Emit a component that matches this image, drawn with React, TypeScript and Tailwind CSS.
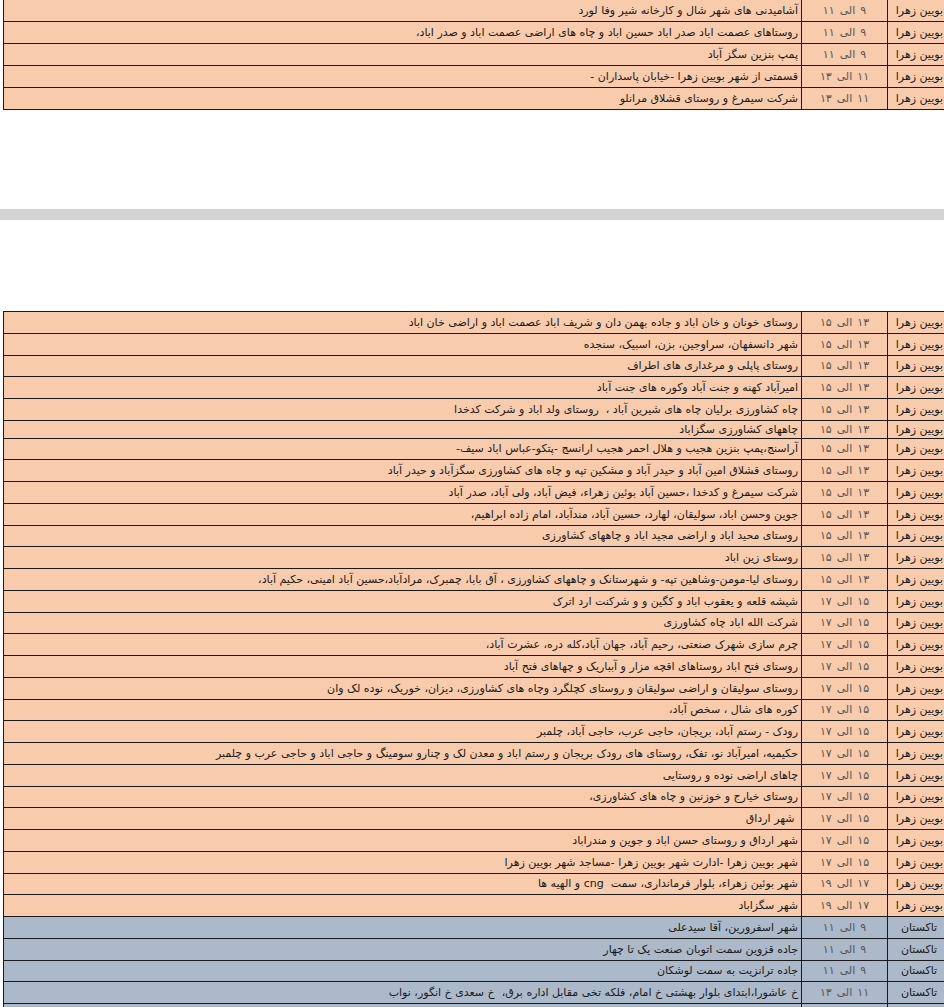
import React from "react";

type Row = { place: string; from: string; to: string; text: string; short?: boolean };

const first: Row[] = [
  { place: "بویین زهرا", from: "۹", to: "۱۱", text: "آشامیدنی های شهر شال و کارخانه شیر وفا لورد" },
  { place: "بویین زهرا", from: "۹", to: "۱۱", text: "روستاهای عصمت اباد صدر اباد حسین اباد و چاه های اراضی عصمت اباد و صدر اباد،" },
  { place: "بویین زهرا", from: "۹", to: "۱۱", text: "پمپ بنزین سگز آباد" },
  { place: "بویین زهرا", from: "۱۱", to: "۱۳", text: "قسمتی از شهر بویین زهرا -خیابان پاسداران -" },
  { place: "بویین زهرا", from: "۱۱", to: "۱۳", text: "شرکت سیمرغ و روستای قشلاق مرانلو" },
];

const bz = "بویین زهرا";
const tk = "تاکستان";

const second: Row[] = [
  { place: bz, from: "۱۳", to: "۱۵", text: "روستای خونان و خان اباد و جاده بهمن دان و شریف اباد عصمت اباد و اراضی خان اباد" },
  { place: bz, from: "۱۳", to: "۱۵", text: "شهر دانسفهان، سراوجین، بزن، اسبیک، سنجده" },
  { place: bz, from: "۱۳", to: "۱۵", text: "روستای پاپلی و مرغداری های اطراف" },
  { place: bz, from: "۱۳", to: "۱۵", text: "امیرآباد کهنه و جنت آباد وکوره های جنت آباد" },
  { place: bz, from: "۱۳", to: "۱۵", text: "چاه کشاورزی برلیان چاه های شیرین آباد ،  روستای ولد اباد و شرکت کدخدا" },
  { place: bz, from: "۱۳", to: "۱۵", text: "چاههای کشاورزی سگزاباد", short: true },
  { place: bz, from: "۱۳", to: "۱۵", text: "آراسنج،پمپ بنزین هجیب و هلال احمر هجیب ارانسج -پتکو-عباس اباد سیف-" },
  { place: bz, from: "۱۳", to: "۱۵", text: "روستای قشلاق امین آباد و حیدر آباد و مشکین تپه و چاه های کشاورزی سگزآباد و حیدر آباد" },
  { place: bz, from: "۱۳", to: "۱۵", text: "شرکت سیمرغ و کدخدا ،حسین آباد بوئین زهراء، فیض آباد، ولی آباد، صدر آباد" },
  { place: bz, from: "۱۳", to: "۱۵", text: "جوین وحسن اباد، سولیقان، لهارد، حسین آباد، مندآباد، امام زاده ابراهیم،" },
  { place: bz, from: "۱۳", to: "۱۵", text: "روستای محید اباد و اراضی مجید اباد و چاههای کشاورزی" },
  { place: bz, from: "۱۳", to: "۱۵", text: "روستای زین اباد" },
  { place: bz, from: "۱۳", to: "۱۵", text: "روستای لیا-مومن-وشاهین تپه- و شهرستانک و چاههای کشاورزی ، آق بابا، چمبرک، مرادآباد،حسین آباد امینی، حکیم آباد،" },
  { place: bz, from: "۱۵", to: "۱۷", text: "شیشه قلعه و یعقوب اباد و کگین و و شرکنت ارد اترک" },
  { place: bz, from: "۱۵", to: "۱۷", text: "شرکت الله اباد چاه کشاورزی" },
  { place: bz, from: "۱۵", to: "۱۷", text: "چرم سازی شهرک صنعتی، رحیم آباد، جهان آباد،کله دره، عشرت آباد،" },
  { place: bz, from: "۱۵", to: "۱۷", text: "روستای فتح اباد روستاهای اقچه مزار و آبباریک و چهاهای فتح آباد" },
  { place: bz, from: "۱۵", to: "۱۷", text: "روستای سولیقان و اراضی سولیقان و روستای کچلگرد وچاه های کشاورزی، دیزان، خوریک، نوده لک وان" },
  { place: bz, from: "۱۵", to: "۱۷", text: "کوره های شال ، سخص آباد،" },
  { place: bz, from: "۱۵", to: "۱۷", text: "رودک - رستم آباد، بریجان، حاجی عرب، حاجی آباد، چلمبر" },
  { place: bz, from: "۱۵", to: "۱۷", text: "حکیمیه، امیرآباد نو، تفک، روستای های رودک بریجان و رستم اباد و معدن لک و چنارو سومینگ و حاجی اباد و حاجی عرب و چلمبر" },
  { place: bz, from: "۱۵", to: "۱۷", text: "چاهای اراضی نوده و روستایی" },
  { place: bz, from: "۱۵", to: "۱۷", text: "روستای خیارج و خوزنین و چاه های کشاورزی،" },
  { place: bz, from: "۱۵", to: "۱۷", text: " شهر ارداق" },
  { place: bz, from: "۱۵", to: "۱۷", text: "شهر ارداق و روستای حسن اباد و جوین و مندراباد" },
  { place: bz, from: "۱۵", to: "۱۷", text: "شهر بویین زهرا -ادارت شهر بویین زهرا -مساجد شهر بویین زهرا" },
  { place: bz, from: "۱۷", to: "۱۹", text: "شهر بوئین زهراء، بلوار فرمانداری، سمت  cng و الهیه ها" },
  { place: bz, from: "۱۷", to: "۱۹", text: "شهر سگزاباد" },
];

const third: Row[] = [
  { place: tk, from: "۹", to: "۱۱", text: "شهر اسفرورین، آقا سیدعلی" },
  { place: tk, from: "۹", to: "۱۱", text: "جاده قزوین سمت اتوبان صنعت یک تا چهار" },
  { place: tk, from: "۹", to: "۱۱", text: "جاده ترانزیت به سمت لوشکان" },
  { place: tk, from: "۱۱", to: "۱۳", text: "خ عاشورا،ابتدای بلوار بهشتی خ امام، فلکه تخی مقابل اداره برق،  خ سعدی خ انگور، نواب" },
  { place: "", from: "", to: "", text: "" },
];

function TableRow({ row, tall, blue }: { row: Row; tall: string; blue?: boolean }) {
  const bg = blue ? "bg-[#acb9ca]" : "bg-[#f8cbad]";
  const h = row.short ? "h-[17.75px]" : tall;
  return (
    <div className={`flex ${h} ${bg} border-b border-[#1a1a1a] text-[11px] leading-none`}>
      <div dir="rtl" className="flex w-[797px] items-center overflow-hidden whitespace-pre pr-[3px] text-[#1a1a1a]">
        {row.text}
      </div>
      <div className="flex w-[86px] items-center justify-center gap-[5px] border-l border-[#1a1a1a] text-[#555]">
        {row.from && (
          <>
            <span>{row.to}</span>
            <span>الی</span>
            <span>{row.from}</span>
          </>
        )}
      </div>
      <div dir="rtl" className={`flex w-[59px] items-center border-l border-[#1a1a1a] text-[#1a1a1a] ${blue ? "justify-center pl-[4px]" : "pr-[3px]"}`}>
        {row.place}
      </div>
    </div>
  );
}

export default function App() {
  return (
    <div
      className="h-[1007px] w-[944px] overflow-hidden bg-white"
      style={{ fontFamily: '"DejaVu Sans", sans-serif' }}
    >
      <div className="ml-[3px] w-[944px] border-l border-[#1a1a1a]">
        {first.map((r, i) => (
          <TableRow key={i} row={r} tall="h-[22px]" />
        ))}
      </div>

      <div className="mt-[99px] h-[11px] w-full bg-[#d4d4d4]" />

      <div className="ml-[3px] mt-[91px] w-[944px] border-l border-t border-[#1a1a1a]">
        {second.map((r, i) => (
          <TableRow key={i} row={r} tall="h-[21.75px]" />
        ))}
        {third.map((r, i) => (
          <TableRow key={i} row={r} tall="h-[21.75px]" blue />
        ))}
      </div>
    </div>
  );
}
